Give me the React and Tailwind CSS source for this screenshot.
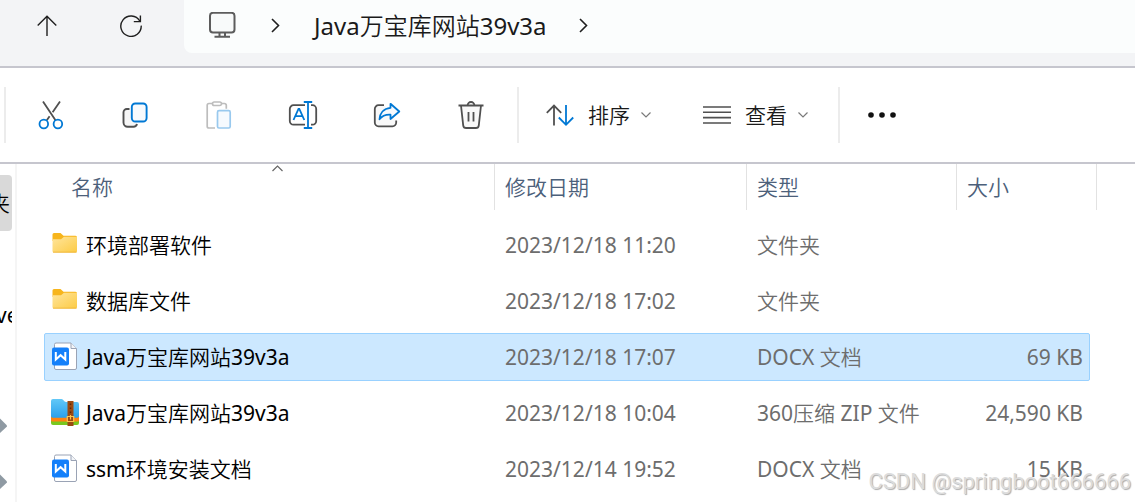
import React from 'react';

const FONT = "font-['Noto_Sans','Noto_Sans_CJK_SC_DemiLight','Noto_Sans_CJK_SC',sans-serif]";

function UpIcon() {
  return (
    <svg width="20" height="22" viewBox="0 0 20 22" fill="none" stroke="#1f1f1f" strokeWidth="1.4">
      <path d="M10 21V1.5M0.7 10.5 10 1.2l9.3 9.3" />
    </svg>
  );
}

function RefreshIcon() {
  return (
    <svg width="22" height="22" viewBox="0 0 22 22" fill="none" stroke="#1f1f1f" strokeWidth="1.4">
      <path d="M21.200 10.600A10.200 10.200 0 1 1 19.800 6" />
      <path d="M20.400 0.600v6h-6.600" />
    </svg>
  );
}

function MonitorIcon() {
  return (
    <svg width="28" height="28" viewBox="0 0 28 28" fill="none" stroke="#5c5c5c" strokeWidth="2">
      <rect x="2" y="0.800" width="24.500" height="19.700" rx="3" fill="#f8fafa" />
      <path d="M11.500 20.500v4M17 20.500v4M6.500 24.700h15.500" />
    </svg>
  );
}

function Chevron() {
  return (
    <svg width="9" height="15" viewBox="0 0 9 15" fill="none" stroke="#1f1f1f" strokeWidth="1.6">
      <path d="M1 1l6.500 6.500L1 14" />
    </svg>
  );
}

function SmallDown() {
  return (
    <svg width="10" height="6" viewBox="0 0 10 6" fill="none" stroke="#7a7a7a" strokeWidth="1.2">
      <path d="M0.500 0.500 5 5l4.500-4.500" />
    </svg>
  );
}

function CutIcon() {
  return (
    <svg width="28" height="30" viewBox="0 0 28 30" fill="none" strokeWidth="1.800">
      <path d="M6 1.500 18.500 20.300M23 1.500 15.600 12.200M12.600 16.200 9.800 20.300" stroke="#505050" />
      <circle cx="6.800" cy="24" r="4.300" stroke="#0078d4" />
      <circle cx="20.900" cy="24" r="4.300" stroke="#0078d4" />
    </svg>
  );
}

function CopyIcon() {
  return (
    <svg width="28" height="30" viewBox="0 0 28 30" fill="none" strokeWidth="1.900">
      <path d="M8.500 9H6A3.300 3.300 0 0 0 2.500 12.300V22.500a4.200 4.200 0 0 0 4.200 4.200H12.500a3.600 3.600 0 0 0 3.500-2.700" stroke="#505050" fill="#f7f7f7" />
      <rect x="10.800" y="3.500" width="14.800" height="18" rx="3.500" stroke="#0078d4" fill="#f7fafd" />
    </svg>
  );
}

function PasteIcon() {
  return (
    <svg width="28" height="30" viewBox="0 0 28 30" fill="none" strokeWidth="1.700">
      <path d="M7.500 3.500H4A1.800 1.800 0 0 0 2.200 5.300v20.900A1.800 1.800 0 0 0 4 28h6M16.500 3.500h3A1.800 1.800 0 0 1 21.300 5.300v3.500" stroke="#bdbdbd" />
      <rect x="7.500" y="2" width="9" height="3.500" rx="1.700" stroke="#bdbdbd" />
      <rect x="12.500" y="10.700" width="12.700" height="17.300" rx="1.500" stroke="#99c9ee" fill="#f6fafe" />
    </svg>
  );
}

function RenameIcon() {
  return (
    <svg width="30" height="30" viewBox="0 0 30 30" fill="none" strokeWidth="1.800">
      <path d="M17 5.200H5.500A3.700 3.700 0 0 0 1.800 8.900v12A3.700 3.700 0 0 0 5.500 24.600H17M23 5.200h1.500a3.700 3.700 0 0 1 3.700 3.700v12a3.700 3.700 0 0 1-3.700 3.700H23" stroke="#505050" />
      <path d="M5.500 20 10.500 8.800h.8l5 11.200M7.500 16.200h7M20 2v26M15.800 2h8.400M15.800 28h8.400" stroke="#0078d4" />
    </svg>
  );
}

function ShareIcon() {
  return (
    <svg width="28" height="30" viewBox="0 0 28 30" fill="none" strokeWidth="1.800" strokeLinejoin="round">
      <path d="M11 5.200H5.500A3.700 3.700 0 0 0 1.800 8.900v13.700a3.700 3.700 0 0 0 3.700 3.700h14a3.700 3.700 0 0 0 3.700-3.700v-2" stroke="#505050" fill="#f9f9f9" />
      <path d="M17.500 3.800 26.300 11.500 17.500 19V14.700c-5-.3-8.500 1.300-11 4.600.3-6 4-10.800 11-11.500z" stroke="#0078d4" fill="#f6fafe" />
    </svg>
  );
}

function TrashIcon() {
  return (
    <svg width="28" height="30" viewBox="0 0 28 30" fill="none" stroke="#505050" strokeWidth="1.800">
      <path d="M4 5.500l2.200 19.800a3 3 0 0 0 3 2.700h9.600a3 3 0 0 0 3-2.700L24 5.500" fill="#f9f9f9" />
      <path d="M1.500 5.500h25M10.500 5.500a3.500 3.500 0 0 1 7 0M11.500 12v9.500M16.500 12v9.500" />
    </svg>
  );
}

function SortIcon() {
  return (
    <svg width="28" height="24" viewBox="0 0 28 24" fill="none" strokeWidth="1.800">
      <path d="M8 22.500V2.500M0.800 9.800 8 2.500l7.200 7.300" stroke="#505050" />
      <path d="M20 2v20M12.800 14.500 20 21.800l7.200-7.300" stroke="#0078d4" />
    </svg>
  );
}

function ListIcon() {
  return (
    <svg width="28" height="18" viewBox="0 0 28 18" stroke="#505050" strokeWidth="1.600">
      <path d="M0 1h28M0 6.300h28M0 11.600h28M0 17h28" />
    </svg>
  );
}

function FolderIcon() {
  return (
    <svg width="28" height="30" viewBox="0 0 28 30">
      <defs>
        <linearGradient id="folder" x1="0" y1="0" x2="1" y2="1">
          <stop offset="0" stopColor="#ffe59c" />
          <stop offset="1" stopColor="#fccb45" />
        </linearGradient>
      </defs>
      <path d="M1.500 4.500a1.500 1.500 0 0 1 1.500-1.500h6.500l3 2.800h12a1.500 1.500 0 0 1 1.500 1.500V11h-24.500z" fill="#f7b51c" />
      <path d="M1.500 9.200h8.500l3-2.400h13v14.200a1.500 1.500 0 0 1-1.500 1.500h-21.500a1.500 1.500 0 0 1-1.500-1.500z" fill="url(#folder)" />
      <path d="M2 22.200h23.500" stroke="#edaf2c" strokeWidth="0.800" />
    </svg>
  );
}

function DocIcon() {
  return (
    <svg width="28" height="30" viewBox="0 0 28 30" fill="none">
      <path d="M5 1H20L25.500 6.500V26a1.500 1.500 0 0 1-1.500 1.500H5A1.500 1.500 0 0 1 3.500 26V2.500A1.500 1.500 0 0 1 5 1z" fill="#fff" stroke="#9aa3b5" />
      <path d="M20 1V6.500h5.500" fill="#f3f5f8" stroke="#9aa3b5" />
      <rect x="1" y="5.500" width="17" height="18" rx="2" fill="#1480fa" />
      <path d="M4.800 10V17.500L9.600 13.200l4.700 4.300V10" stroke="#fff" strokeWidth="2" />
    </svg>
  );
}

function ZipIcon() {
  return (
    <svg width="28" height="30" viewBox="0 0 28 30">
      <defs>
        <linearGradient id="zip" x1="0" y1="0" x2="0" y2="1">
          <stop offset="0" stopColor="#62c8f7" />
          <stop offset="1" stopColor="#2ba0ec" />
        </linearGradient>
      </defs>
      <path d="M0 20.500h28v4.500a2 2 0 0 1-2 2H2a2 2 0 0 1-2-2z" fill="#79c81f" />
      <path d="M0 17.500h28v4.500a1.500 1.500 0 0 1-1.500 1.500h-25a1.500 1.500 0 0 1-1.500-1.500z" fill="#ff8412" />
      <path d="M0 3A2 2 0 0 1 2 1h8.500c2 0 2.400 2.700 4.500 3h11a2 2 0 0 1 2 2v12a1.700 1.700 0 0 1-1.700 1.700H1.700A1.700 1.700 0 0 1 0 18z" fill="url(#zip)" />
      <path d="M16.500 3h6v25h-6z" fill="#9b4a12" />
      <path d="M19.500 5.500v1.500M19.500 9.500v1.500M19.500 13.500v1.500" stroke="#5c2606" strokeWidth="1.500" />
      <path d="M16.300 18.500h6.400v5h-6.400zM19.500 17v4.500" fill="none" stroke="#ffc44d" strokeWidth="1.200" />
    </svg>
  );
}

function PinIcon() {
  return (
    <svg width="8" height="20" viewBox="0 0 8 20">
      <path d="M0 1.500l7 7v1L0 16z" fill="#8f9aa3" />
    </svg>
  );
}

const files = [
  { name: '环境部署软件', date: '2023/12/18 11:20', type: '文件夹', size: '', Icon: FolderIcon },
  { name: '数据库文件', date: '2023/12/18 17:02', type: '文件夹', size: '', Icon: FolderIcon },
  { name: 'Java万宝库网站39v3a', date: '2023/12/18 17:07', type: 'DOCX 文档', size: '69 KB', Icon: DocIcon, selected: true },
  { name: 'Java万宝库网站39v3a', date: '2023/12/18 10:04', type: '360压缩 ZIP 文件', size: '24,590 KB', Icon: ZipIcon },
  { name: 'ssm环境安装文档', date: '2023/12/14 19:52', type: 'DOCX 文档', size: '15 KB', Icon: DocIcon },
];

const tools = [
  ['剪切', CutIcon],
  ['复制', CopyIcon],
  ['粘贴', PasteIcon],
  ['重命名', RenameIcon],
  ['共享', ShareIcon],
  ['删除', TrashIcon],
];

const iconButton = 'flex h-12 w-12 items-center justify-center';
const headCell = 'h-full border-l border-[#e2e2e2] pl-[10px] text-left font-normal';

export default function App() {
  return (
    <div className={`relative flex h-screen flex-col overflow-hidden bg-white text-[21px] leading-7 text-black ${FONT}`}>
      <header className="flex h-[68px] shrink-0 border-b-2 border-[#c6c6ce] bg-[#f3f4f6]">
        <div className="flex h-[52px] w-[184px] shrink-0 items-center gap-9 pl-[23px]">
          <button aria-label="上移" className={iconButton}><UpIcon /></button>
          <button aria-label="刷新" className={iconButton}><RefreshIcon /></button>
        </div>
        <nav aria-label="地址" className="flex h-[53px] flex-1 items-center rounded-bl-lg bg-[#fbfdfd] pb-[2px] pl-6 text-2xl text-[#1a1a1a]">
          <button aria-label="此电脑"><MonitorIcon /></button>
          <span className="ml-[35px]"><Chevron /></span>
          <a href="#folder" className="ml-[34px]">Java万宝库网站39v3a</a>
          <span className="ml-8"><Chevron /></span>
        </nav>
      </header>

      <div role="toolbar" className="flex h-24 shrink-0 items-center border-b-2 border-[#c6c6ce] pl-1 text-[#1a1a1a]">
        <div className="flex h-14 items-center gap-9 border-l-2 border-[#ececec] pl-[21px] pr-[22px]">
          {tools.map(([label, Icon]) => (
            <button key={label} aria-label={label} className={iconButton}><Icon /></button>
          ))}
        </div>
        <div className="flex h-14 items-center gap-[52px] border-x-2 border-[#ececec] pl-[27px] pr-[30px]">
          <button className="flex items-center">
            <SortIcon />
            <span className="ml-[14px] mr-[11px]">排序</span>
            <SmallDown />
          </button>
          <button className="flex items-center">
            <ListIcon />
            <span className="ml-[14px] mr-[11px]">查看</span>
            <SmallDown />
          </button>
        </div>
        <button aria-label="更多" className="ml-[28px]">
          <svg width="28" height="6" viewBox="0 0 28 6" fill="#111">
            <circle cx="3" cy="3" r="2.800" />
            <circle cx="14" cy="3" r="2.800" />
            <circle cx="25" cy="3" r="2.800" />
          </svg>
        </button>
      </div>

      <main className="flex min-h-0 flex-1">
        <aside className="w-[17px] shrink-0 overflow-hidden border-r-2 border-[#f5f5f5] pr-[3px] pt-[11px]">
          <div className="flex h-14 items-center justify-end overflow-hidden rounded-r-sm bg-[#d9d9d9] pr-[2px]">夹</div>
          <div className="h-14" />
          <div className="flex h-14 items-center overflow-hidden">
            <span className="-ml-1">ve</span>
          </div>
          <div className="h-14" />
          <div className="flex h-14 items-center"><PinIcon /></div>
          <div className="flex h-14 items-center"><PinIcon /></div>
        </aside>

        <table className="ml-[27px] mr-[38px] block flex-1">
          <thead className="block">
            <tr className="flex h-[46px] text-[#4c607a]">
              <th className="relative ml-4 flex-1 pl-[11px] pt-[9px] text-left font-normal">
                名称
                <svg className="absolute left-1/2 top-px -ml-[5px]" width="11" height="7" viewBox="0 0 11 7" fill="none" stroke="#666" strokeWidth="1.200">
                  <path d="M0.500 6 5.500 1l5 5" />
                </svg>
              </th>
              <th className={`${headCell} w-[252px] pt-[9px]`}>修改日期</th>
              <th className={`${headCell} w-[210px] pt-[9px]`}>类型</th>
              <th className={`${headCell} w-[141px] border-r pt-[9px]`}>大小</th>
            </tr>
          </thead>
          <tbody className="mr-[7px] mt-[11px] flex flex-col gap-2">
            {files.map(({ name, date, type, size, Icon, selected }, i) => (
              <tr
                key={i}
                className={`flex h-12 items-center border ${selected ? 'rounded-xs border-[#99d1ff] bg-[#cce8ff]' : 'border-transparent'}`}
              >
                <td className="flex flex-1 items-center gap-[7px] pl-[6px]"><Icon />{name}</td>
                <td className="w-[252px] pl-[11px] text-[#6d6d6d]">{date}</td>
                <td className="w-[210px] pl-[11px] text-[#6d6d6d]">{type}</td>
                <td className="w-[133px] pr-[6px] text-right text-[#6d6d6d]">{size}</td>
              </tr>
            ))}
          </tbody>
        </table>
      </main>

      <div className="pointer-events-none absolute bottom-[6px] right-1 font-['Roboto',sans-serif] text-[22px] text-[#dcdcdc] [text-shadow:1px_1px_1px_#adadad]">
        CSDN @springboot666666
      </div>
    </div>
  );
}
